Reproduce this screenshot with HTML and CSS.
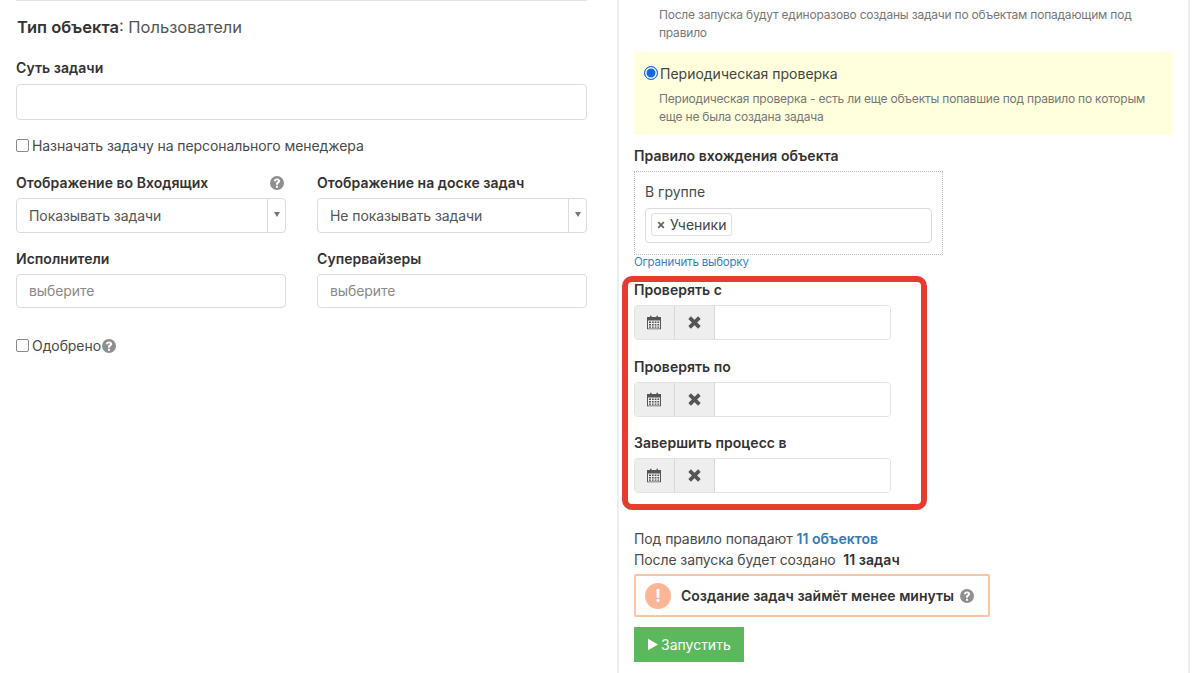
FILE: index.html
```html
<!DOCTYPE html>
<html lang="ru">
<head>
<meta charset="utf-8">
<title>Задача</title>
<link rel="stylesheet" href="styles.css">
</head>
<body>
<div class="page">
  <main class="left">
    <div class="top-box"></div>
    <div class="object-type"><b>Тип объекта</b>: Пользователи</div>
    <label class="label essence-label">Суть задачи</label>
    <div class="field essence"></div>
    <div class="check-row assign"><span class="check"></span>Назначать задачу на персонального менеджера</div>
    <div class="two-col">
      <div>
        <div class="label label-row"><span>Отображение во Входящих</span>
          <svg class="help inbox-help" viewBox="0 0 14 14"><use href="#help"/></svg></div>
        <div class="field select"><span>Показывать задачи</span><i class="arrow"></i></div>
      </div>
      <div>
        <div class="label label-row"><span>Отображение на доске задач</span></div>
        <div class="field select"><span>Не показывать задачи</span><i class="arrow"></i></div>
      </div>
      <div>
        <div class="label label-row"><span>Исполнители</span></div>
        <div class="field picker">выберите</div>
      </div>
      <div>
        <div class="label label-row"><span>Супервайзеры</span></div>
        <div class="field picker">выберите</div>
      </div>
    </div>
    <div class="check-row approved"><span class="check"></span>Одобрено<svg class="help approved-help" viewBox="0 0 14 14"><use href="#help"/></svg></div>
  </main>
  <aside class="right">
    <p class="hint first-hint">После запуска будут единоразово созданы задачи по объектам попадающим под правило</p>
    <section class="periodic">
      <div class="radio-row"><span class="radio"></span>Периодическая проверка</div>
      <p class="hint">Периодическая проверка - есть ли еще объекты попавшие под правило по которым еще не была создана задача</p>
    </section>
    <div class="label rule-title">Правило вхождения объекта</div>
    <div class="rule-box">
      <div class="group-title">В группе</div>
      <div class="tags"><span class="tag"><svg class="tag-x" viewBox="0 0 8 8"><path d="M1.2 1.2 6.8 6.8M6.8 1.2 1.2 6.8"/></svg>Ученики</span></div>
    </div>
    <a class="limit">Ограничить выборку</a>
    <section class="dates">
      <div class="label">Проверять с</div>
      <div class="date-input"><span class="addon"><svg class="cal" viewBox="0 0 14 14"><use href="#cal"/></svg></span><span class="addon"><svg class="cross" viewBox="0 0 12 12"><use href="#cross"/></svg></span><span class="date-value"></span></div>
      <div class="label">Проверять по</div>
      <div class="date-input"><span class="addon"><svg class="cal" viewBox="0 0 14 14"><use href="#cal"/></svg></span><span class="addon"><svg class="cross" viewBox="0 0 12 12"><use href="#cross"/></svg></span><span class="date-value"></span></div>
      <div class="label">Завершить процесс в</div>
      <div class="date-input"><span class="addon"><svg class="cal" viewBox="0 0 14 14"><use href="#cal"/></svg></span><span class="addon"><svg class="cross" viewBox="0 0 12 12"><use href="#cross"/></svg></span><span class="date-value"></span></div>
    </section>
    <div class="summary">Под правило попадают <b class="link-strong">11 объектов</b></div>
    <div class="summary">После запуска будет создано&nbsp; <b>11 задач</b></div>
    <div class="notice"><span class="bang">!</span><b>Создание задач займёт менее минуты</b><svg class="help" viewBox="0 0 14 14"><use href="#help"/></svg></div>
    <button class="run"><svg class="play" viewBox="0 0 12 14"><path d="M0 0 12 7 0 14Z"/></svg>Запустить</button>
  </aside>
</div>
<svg class="defs" aria-hidden="true">
  <symbol id="help" viewBox="0 0 14 14">
    <path fill="currentColor" fill-rule="evenodd" d="M7 0a7 7 0 1 1 0 14A7 7 0 0 1 7 0ZM6 9.8v2h2v-2ZM7 2.4c-1.8 0-3 1-3.2 2.6l1.9.4c.1-.8.6-1.2 1.3-1.2.6 0 1 .3 1 .8 0 .4-.3.7-.9 1.1-.8.5-1.1 1.1-1.1 2v.6h1.9v-.4c0-.4.2-.6.8-1 .9-.6 1.4-1.3 1.4-2.3 0-1.6-1.2-2.6-3.100-2.600Z"/>
  </symbol>
  <symbol id="cal" viewBox="0 0 14 14">
    <path fill="currentColor" fill-rule="evenodd" d="M3 0h1.500v1.500h5V0H11v1.500h3V14H0V1.500h3ZM1 5v8h12V5ZM2 6h2v1.500H2Zm3 0h1.700v1.500H5Zm2.700 0h1.700v1.500H7.700Zm2.700 0h1.700v1.500h-1.700ZM2 8.500h2V10H2Zm3 0h1.700V10H5Zm2.700 0h1.700V10H7.700Zm2.700 0h1.700V10h-1.700ZM2 11h2v1.200H2Zm3 0h1.700v1.200H5Zm2.700 0h1.700v1.200H7.700Zm2.700 0h1.700v1.200h-1.700Z"/>
  </symbol>
  <symbol id="cross" viewBox="0 0 12 12">
    <path fill="none" stroke="currentColor" stroke-width="3.400" d="M1.500 1.500 10.500 10.500M10.500 1.500 1.500 10.500"/>
  </symbol>
</svg>
</body>
</html>
```
FILE: styles.css
```css
* { box-sizing: border-box; }
html, body { margin: 0; height: 673px; overflow: hidden; background: #fff; }
body { font-family: Inter, "Noto Sans", sans-serif; font-size: 14px; color: #3f3f3f; }
.defs { position: absolute; width: 0; height: 0; }
.page { display: grid; grid-template-columns: 617px 573px; height: 673px; }
.left { padding: 0 30px 0 16px; }
.right { border-left: 2px solid #eee; border-right: 2px solid #eee; padding: 0 15px 0 15px; }
.top-box { height: 1px; margin-left: 0; background: #e4e4e4; }
.object-type { margin: 16px 0 0 1px; font-size: 16.500px; line-height: 20px; color: #555; }
.object-type b { font-weight: 600; color: #333; }
.label { font-size: 14px; line-height: 18px; font-weight: 600; color: #333; letter-spacing: 0.04px; }
.essence-label { display: block; margin-top: 22px; }
.field { border: 1px solid #dcdcdc; border-radius: 4px; background: #fff; }
.essence { height: 36px; margin-top: 7px; }
.check-row { display: flex; align-items: center; line-height: 18px; color: #4a4a4a; letter-spacing: -0.08px; }
.assign { margin-top: 17px; }
.check { width: 13px; height: 13px; border: 1px solid #8a8a8a; border-radius: 2px; margin: 0 3px 2px 0; background: #fff; }
.two-col { display: grid; grid-template-columns: 270px 270px; column-gap: 31px; row-gap: 17px; margin-top: 19px; }
.label-row { display: flex; justify-content: space-between; align-items: center; margin-bottom: 6px; }
.help { width: 14px; height: 14px; color: #8f8f8f; flex: none; }
.inbox-help { margin-right: 2px; }
.select { display: flex; height: 35px; align-items: center; padding-left: 12px; color: #555; position: relative; letter-spacing: -0.08px; }
.select span { flex: 1; }
.arrow { width: 18px; height: 100%; border-left: 1px solid #dcdcdc; display: flex; justify-content: center; padding-top: 13px; }
.arrow::before { content: ""; width: 0; height: 0; border: 3px solid transparent; border-top: 5px solid #777; border-bottom: 0; }
.picker { height: 34px; line-height: 32px; padding-left: 12px; color: #8a8a8a; letter-spacing: -0.08px; }
.approved { margin-top: 29px; }
.approved-help { margin-left: 1px; }
.hint { margin: 0; font-size: 12px; line-height: 18px; color: #777; letter-spacing: -0.2px; }
.first-hint { padding: 6px 20px 0 25px; width: 530px; }
.periodic { margin-top: 10px; height: 83px; background: #ffffdd; padding: 12px 10px 0 10px; }
.periodic .hint { margin-left: 15px; margin-top: 6px; }
.radio-row { display: flex; align-items: center; line-height: 20px; font-size: 14px; color: #444; }
.radio { width: 14px; height: 14px; border-radius: 50%; background: #1669e6; border: 1px solid #1669e6; box-shadow: inset 0 0 0 1.500px #fff; margin: 0 2px 2px 0; }
.rule-title { margin-top: 12px; }
.rule-box { width: 309px; height: 84px; margin-top: 6px; border: 1px dotted #bdbdbd; padding: 11px 10px 0; }
.group-title { line-height: 18px; color: #4a4a4a; }
.tags { height: 35px; margin-top: 7px; border: 1px solid #dcdcdc; border-radius: 4px; padding: 4px 5px; }
.tag { display: inline-flex; align-items: center; height: 23px; border: 1px solid #e0e0e0; border-radius: 3px; padding: 0 5px; color: #444; }
.tag-x { width: 8px; height: 8px; margin-right: 5px; fill: none; stroke: #666; stroke-width: 1.800; }
.limit { display: block; font-size: 11.500px; line-height: 14px; letter-spacing: -0.2px; color: #3a7fc1; }
.dates { margin: 7px 0 0 -12px; width: 305px; height: 234px; border: 6px solid #e63c30; border-radius: 10px; padding: 0 0 0 6px; }
.dates .label { line-height: 16px; margin-bottom: 7px; }
.date-input { display: flex; width: 257px; height: 35px; border: 1px solid #e2e2e2; border-radius: 4px; overflow: hidden; margin-bottom: 18.500px; }
.addon { width: 40px; display: flex; align-items: center; justify-content: center; padding-right: 1px; background: #eee; border-right: 1px solid #d8d8d8; color: #555; }
.cal { width: 14px; height: 15px; }
.cross { width: 13px; height: 13px; }
.date-value { flex: 1; background: #fff; }
.summary { line-height: 21px; color: #4a4a4a; letter-spacing: -0.1px; }
.dates + .summary { margin-top: 18px; }
.summary b { font-weight: 600; color: #333; letter-spacing: 0.05px; }
.summary .link-strong { color: #337ab7; }
.notice { display: flex; align-items: center; width: 356px; height: 43px; margin-top: 4px; border: 2px solid #fbc4a4; border-radius: 2px; padding-left: 9px; }
.notice b { font-weight: 600; color: #333; margin: 0 6px 0 10px; }
.bang { width: 26px; height: 26px; border-radius: 50%; background: #fdb594; color: #fff; font-size: 18px; font-weight: 700; text-align: center; line-height: 26px; }
.run { display: flex; align-items: center; width: 110px; height: 35px; margin-top: 10px; border: 0; background: #5cb85c; color: #fff; font: inherit; padding: 0 0 0 14px; }
.play { width: 10px; height: 13px; fill: #fff; margin-right: 3px; }
```
